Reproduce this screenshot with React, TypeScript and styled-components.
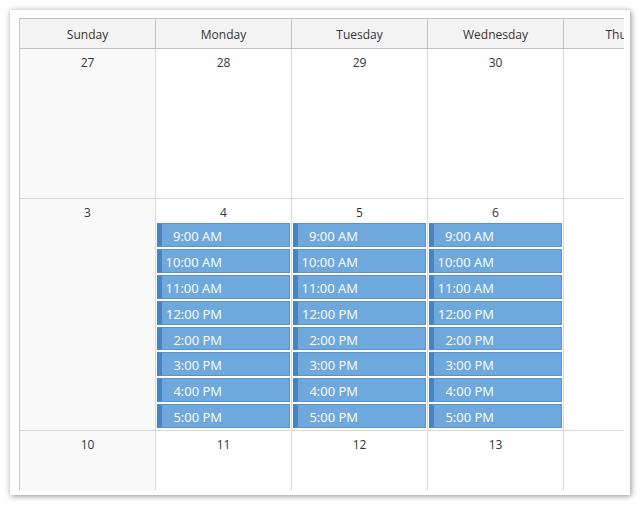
import styled, { createGlobalStyle } from "styled-components";

const GlobalStyle = createGlobalStyle`
  html, body {
    margin: 0;
    padding: 0;
    background: #ffffff;
    font-family: "Open Sans", "Liberation Sans", sans-serif;
  }
`;

const DAYS = ["Sunday", "Monday", "Tuesday", "Wednesday", "Thursday", "Friday", "Saturday"];

const WEEKS = [
  { days: [27, 28, 29, 30, 1, 2, 3], height: 150, events: [] as number[] },
  { days: [3, 4, 5, 6, 7, 8, 9], height: 232, events: [1, 2, 3] },
  { days: [10, 11, 12, 13, 14, 15, 16], height: 150, events: [] as number[] },
];

const TIMES = ["9:00 AM", "10:00 AM", "11:00 AM", "12:00 PM", "2:00 PM", "3:00 PM", "4:00 PM", "5:00 PM"];

const Card = styled.div`
  margin: 10px;
  width: 620px;
  height: 485px;
  background: #ffffff;
  box-shadow: 1px 1px 6px rgba(0, 0, 0, 0.45);
  padding: 8px 6px 5px 9px;
  box-sizing: border-box;
`;

const Viewport = styled.div`
  width: 605px;
  height: 472px;
  overflow: hidden;
`;

const Grid = styled.div`
  display: grid;
  grid-template-columns: repeat(7, 136px);
  width: 953px;
  border-left: 1px solid #c8c8c8;
  border-top: 1px solid #c0c0c0;
`;

const HeaderCell = styled.div`
  height: 28px;
  padding-top: 1px;
  line-height: 29px;
  text-align: center;
  font-size: 12px;
  color: #333333;
  background: #f3f3f3;
  border-right: 1px solid #c0c0c0;
  border-bottom: 1px solid #c0c0c0;
`;

const DayCell = styled.div<{ $weekend: boolean; $h: number }>`
  height: ${(p) => p.$h - 1}px;
  background: ${(p) => (p.$weekend ? "#f9f9f9" : "#ffffff")};
  border-right: 1px solid #d9d9d9;
  border-bottom: 1px solid #d9d9d9;
  display: flex;
  flex-direction: column;
`;

const DayNumber = styled.div`
  height: 22px;
  padding-top: 2px;
  line-height: 24px;
  text-align: center;
  font-size: 12px;
  color: #333333;
`;

const Event = styled.div`
  height: 22px;
  margin: 0 1px 2px 1px;
  background: #6fa8dc;
  border: 1px solid #5d92c8;
  border-left: 5px solid #4b83bc;
  color: #ffffff;
  font-size: 13px;
  line-height: 25px;
  display: flex;
  overflow: hidden;
`;

const EventText = styled.span`
  width: 60px;
  text-align: right;
  white-space: nowrap;
`;

export default function App() {
  return (
    <>
      <GlobalStyle />
      <Card>
        <Viewport>
          <Grid>
            {DAYS.map((d) => (
              <HeaderCell key={d}>{d}</HeaderCell>
            ))}
            {WEEKS.map((w, wi) =>
              w.days.map((n, di) => (
                <DayCell key={`${wi}-${di}`} $weekend={di === 0} $h={w.height}>
                  <DayNumber>{n}</DayNumber>
                  {w.events.includes(di) &&
                    TIMES.map((t) => (
                      <Event key={t}>
                        <EventText>{t}</EventText>
                      </Event>
                    ))}
                </DayCell>
              ))
            )}
          </Grid>
        </Viewport>
      </Card>
    </>
  );
}
